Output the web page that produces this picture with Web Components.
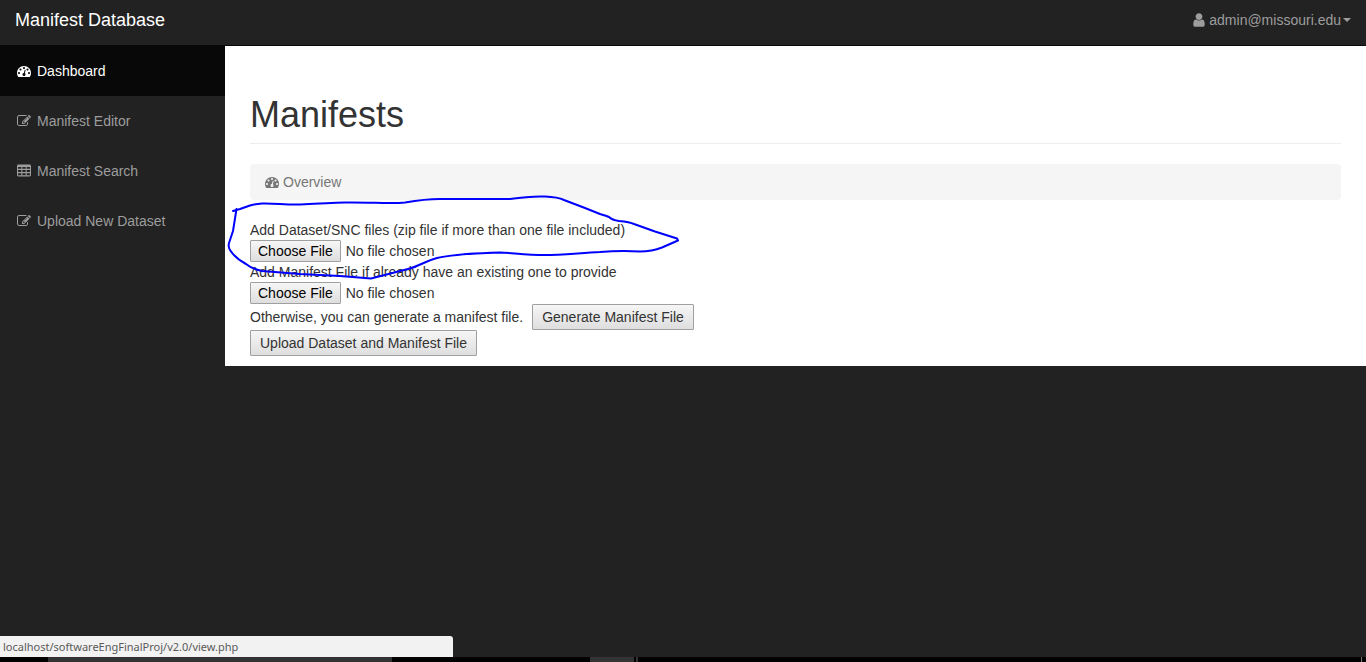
<!DOCTYPE html>
<html lang="en">
<head>
<meta charset="utf-8">
<title>Manifest Database</title>
<style>
  body { margin: 0; background: #222; color: #333; font: 14px/20px "Liberation Sans", Arial, sans-serif; }
</style>
</head>
<body>
<admin-shell>
  <top-bar slot="header" user="admin@missouri.edu">Manifest Database</top-bar>
  <side-nav slot="nav">
    <nav-item icon="dashboard" href="#dashboard" active>Dashboard</nav-item>
    <nav-item icon="edit" href="#editor">Manifest Editor</nav-item>
    <nav-item icon="table" href="#search">Manifest Search</nav-item>
    <nav-item icon="edit" href="#upload">Upload New Dataset</nav-item>
  </side-nav>
  <manifest-page>
    <crumb-bar icon="dashboard">Overview</crumb-bar>
    <upload-form></upload-form>
    <pen-mark slot="mark"></pen-mark>
  </manifest-page>
  <status-bubble slot="footer">localhost/softwareEngFinalProj/v2.0/view.php</status-bubble>
  <task-strip slot="footer"></task-strip>
</admin-shell>

<script>
const ICONS = {
  dashboard: { box: '0 0 1792 1792', art: '<path d="M384 1152q0-53-37.5-90.5t-90.5-37.5-90.5 37.5-37.5 90.5 37.5 90.5 90.5 37.5 90.5-37.5 37.5-90.5zm192-448q0-53-37.5-90.5t-90.5-37.5-90.5 37.5-37.5 90.5 37.5 90.5 90.5 37.5 90.5-37.5 37.5-90.5zm428 481l101-382q6-26-7.5-48.5t-38.5-29.5-48 6.5-30 39.5l-101 382q-60 5-107 43.5t-63 98.5q-20 77 20 146t117 89 146-20 89-117q16-60-6-117t-72-91zm660-33q0-53-37.5-90.5t-90.5-37.5-90.5 37.5-37.5 90.5 37.5 90.5 90.5 37.5 90.5-37.5 37.5-90.5zm-640-640q0-53-37.5-90.5t-90.5-37.5-90.5 37.5-37.5 90.5 37.5 90.5 90.5 37.5 90.5-37.5 37.5-90.5zm448 192q0-53-37.5-90.5t-90.5-37.5-90.5 37.5-37.5 90.5 37.5 90.5 90.5 37.5 90.5-37.5 37.5-90.5zm320 448q0 261-141 483-19 29-54 29h-1402q-35 0-54-29-141-221-141-483 0-182 71-348t191-286 286-191 348-71 348 71 286 191 191 286 71 348z"/>' },
  edit: { box: '0 0 1792 1792', art: '<path d="M888 1184l116-116-152-152-116 116v56h96v96h56zm440-720q-16-16-33 1l-350 350q-17 17-1 33t33-1l350-350q17-17 1-33zm80 594v190q0 119-84.5 203.5t-203.5 84.5h-832q-119 0-203.5-84.5t-84.5-203.5v-832q0-119 84.5-203.5t203.5-84.5h832q63 0 117 25 15 7 18 23 3 17-9 29l-49 49q-14 14-32 8-23-6-45-6h-832q-66 0-113 47t-47 113v832q0 66 47 113t113 47h832q66 0 113-47t47-113v-126q0-13 9-22l64-64q15-15 35-7t20 29zm-96-738l288 288-672 672h-288v-288zm444 132l-92 92-288-288 92-92q28-28 68-28t68 28l152 152q28 28 28 68t-28 68z"/>' },
  table: { box: '64 64 1664 1664', art: '<path fill-rule="evenodd" d="M224 128h1344q160 0 160 160v1088q0 160-160 160h-1344q-160 0-160-160v-1088q0-160 160-160zM192 416v224h384v-224zM704 416v224h384v-224zM1216 416v224h384v-224zM192 768v256h384v-256zM704 768v256h384v-256zM1216 768v256h384v-256zM192 1152v256h384v-256zM704 1152v256h384v-256zM1216 1152v256h384v-256z"/>' },
  user: { box: '0 0 1792 1792', art: '<path d="M1536 1399q0 109-62.5 187t-150.5 78h-854q-88 0-150.5-78t-62.5-187q0-85 8.5-160.5t31.5-152 58.5-131 94-89 134.5-34.5q131 128 313 128t313-128q76 0 134.5 34.5t94 89 58.5 131 31.5 152 8.5 160.5zm-256-887q0 159-112.5 271.5t-271.5 112.5-271.5-112.5-112.5-271.5 112.5-271.5 271.5-112.5 271.5 112.5 112.5 271.5z"/>' }
};

class Base extends HTMLElement {
  connectedCallback() {
    if (!this.shadowRoot) this.attachShadow({ mode: 'open' }).innerHTML = this.render();
  }
}
const define = (name, render) =>
  customElements.define(name, class extends Base { render() { return render(this); } });

define('fa-icon', el => `
  <style>
    :host { display: inline-flex; flex: none; }
    svg { width: var(--icon-size, 14px); height: var(--icon-size, 14px); fill: currentColor; }
  </style>
  <svg viewBox="${ICONS[el.getAttribute('name')].box}" aria-hidden="true">${ICONS[el.getAttribute('name')].art}</svg>`);

define('admin-shell', () => `
  <style>
    :host { display: flex; flex-direction: column; min-height: 100vh; }
    .body { flex: 1; display: grid; grid-template-columns: 225px minmax(0, 1fr); align-items: start; }
  </style>
  <slot name="header"></slot>
  <div class="body"><slot name="nav"></slot><slot></slot></div>
  <footer><slot name="footer"></slot></footer>`);

define('top-bar', el => `
  <style>
    :host { display: block; border-bottom: 1px solid #080808; }
    header { display: flex; justify-content: space-between; padding: 10px 15px 15px; }
    .brand { color: #fff; font-size: 18px; text-decoration: none; }
    button { display: flex; align-items: center; padding: 0; border: 0; background: none; color: #9d9d9d; font: inherit; }
    fa-icon { --icon-size: 16px; margin-right: 2px; }
    .caret { margin-left: 2px; border: 4px solid transparent; border-top-color: currentColor; border-bottom: 0; }
  </style>
  <header>
    <a class="brand" href="#home"><slot></slot></a>
    <button type="button" aria-haspopup="menu"><fa-icon name="user"></fa-icon>${el.getAttribute('user')}<span class="caret"></span></button>
  </header>`);

define('side-nav', () => `
  <style>:host { display: block; } nav { display: flex; flex-direction: column; }</style>
  <nav><slot></slot></nav>`);

define('nav-item', el => `
  <style>
    :host { display: block; }
    a { display: flex; align-items: center; gap: 6px; padding: 15px 17px; color: #9d9d9d; text-decoration: none; }
    :host([active]) a { background: #080808; color: #fff; }
  </style>
  <a href="${el.getAttribute('href')}"><fa-icon name="${el.getAttribute('icon')}"></fa-icon><slot></slot></a>`);

define('manifest-page', () => `
  <style>
    :host { display: block; position: relative; padding: 48px 25px 10px; background: #fff; }
    h1 { margin: 0 0 20px; padding-bottom: 7px; border-bottom: 1px solid #eee; font-size: 36px; line-height: 42px; font-weight: 400; }
  </style>
  <h1>Manifests</h1>
  <slot></slot>
  <slot name="mark"></slot>`);

define('crumb-bar', el => `
  <style>
    :host { display: flex; align-items: center; gap: 4px; margin-bottom: 20px; padding: 8px 15px; border-radius: 4px; background: #f5f5f5; color: #777; }
  </style>
  <fa-icon name="${el.getAttribute('icon')}"></fa-icon><slot></slot>`);

define('upload-form', () => `
  <style>
    :host { display: block; }
    label, input { display: block; }
    input { width: 300px; height: 22px; font: inherit; color: inherit; }
    button, input::file-selector-button {
      box-sizing: border-box; padding: 0 7px; border: 1px solid #a0a0a0; border-radius: 1px;
      background: linear-gradient(#f6f6f6, #dedede); font: inherit;
    }
    input::file-selector-button { height: 22px; margin: 0 5px 0 0; color: #000; }
    button { height: 26px; padding: 0 9px; color: #333; }
    .row { display: flex; align-items: center; gap: 9px; }
  </style>
  <form>
    <label for="dataset">Add Dataset/SNC files (zip file if more than one file included)</label>
    <input id="dataset" type="file">
    <label for="manifest">Add Manifest File if already have an existing one to provide</label>
    <input id="manifest" type="file">
    <div class="row"><span>Otherwise, you can generate a manifest file.</span><button type="button">Generate Manifest File</button></div>
    <div class="row"><button type="button">Upload Dataset and Manifest File</button></div>
  </form>`);

/* Freehand pen loop drawn over the first upload field. */
define('pen-mark', () => `
  <style>
    :host { position: absolute; left: 0; top: 145px; pointer-events: none; }
    svg { display: block; width: 460px; height: 95px; fill: none; stroke: #00f; stroke-width: 2; stroke-linejoin: round; stroke-linecap: round; }
  </style>
  <svg viewBox="225 191 460 95" aria-hidden="true">
    <path d="M233 211L240 209L250 205.500Q255 204 262 203.500C275 203 285 205 300 204.500Q330 203 345 202.500C370 202 390 204 405 202.500Q425 199 440 199H510Q530 196 545 196.500Q558 197 564 200L585 208L600 214Q607 216 609 217Q612 220 619 221Q630 222 634 224L655 231.500L677 238.500L678 240.500L662 247.500Q652 251.500 640 251.500Q620 250.500 600 252C580 253 560 255 545 255C525 255 510 252.500 500 252.500C480 253 455 254 437 258C425 261 420 266 408 269L371 278.500L340 276L300 274L262 271Q252 269 246 264Q235 258 230 250Q228 247 229 243L233 231L236.500 209"/>
  </svg>`);

define('status-bubble', () => `
  <style>
    :host { display: block; box-sizing: border-box; width: 453px; max-width: 100%; height: 21px; padding: 0 3px; border-top-right-radius: 3px;
      background: #f2f2f2; color: #5a5a5a; font: 11px/21px "Noto Sans", sans-serif; }
  </style>
  <slot></slot>`);

define('task-strip', () => `
  <style>
    :host { display: grid; grid-template-columns: 48px 344px 198px 44px 2px 2px 1fr 1px 4px; height: 5px; background: #000; }
    i { background: #333; }
    .gap { background: none; }
    .edge { background: #777; }
  </style>
  <i class="gap"></i><i></i><i class="gap"></i><i></i><i class="gap"></i><i></i><i class="gap"></i><i class="edge"></i>`);
</script>
</body>
</html>
